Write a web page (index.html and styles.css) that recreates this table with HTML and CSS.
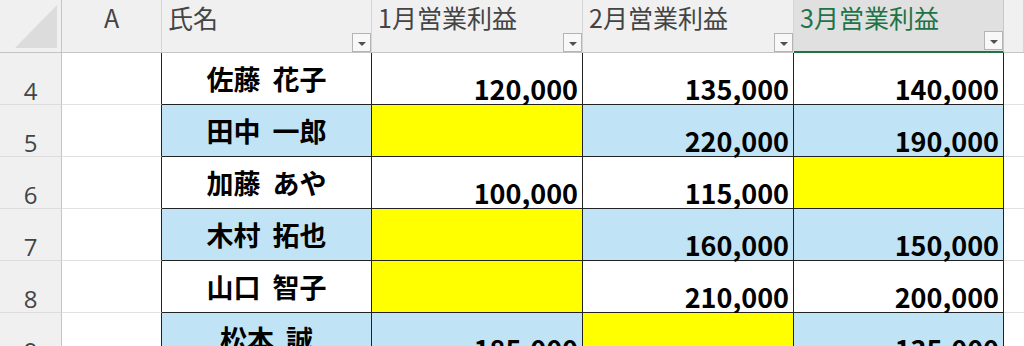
FILE: index.html
```html
<!DOCTYPE html>
<html lang="ja">
<head>
<meta charset="utf-8">
<title>Sheet</title>
<link rel="stylesheet" href="styles.css">
</head>
<body>
<div class="sheet">
  <div class="hd corner"><svg class="tri" width="61" height="52" viewBox="0 0 61 52"><polygon points="57,5 57,48 15,48" fill="#dcdcdc"/></svg></div>
  <div class="hd col center"><span class="htext">A</span></div>
  <div class="hd col"><span class="htext">氏名</span><span class="filter"><i></i></span></div>
  <div class="hd col"><span class="htext">1月営業利益</span><span class="filter"><i></i></span></div>
  <div class="hd col"><span class="htext">2月営業利益</span><span class="filter"><i></i></span></div>
  <div class="hd col sel"><span class="htext">3月営業利益</span><span class="filter"><i></i></span></div>
  <div class="hd col"></div>

  <div class="rh">4</div><div class="ga"></div>
  <div class="tc name">佐藤 花子</div><div class="tc num">120,000</div><div class="tc num">135,000</div><div class="tc num">140,000</div><div class="gf"></div>

  <div class="rh">5</div><div class="ga"></div>
  <div class="tc name blue">田中 一郎</div><div class="tc num yellow"></div><div class="tc num blue">220,000</div><div class="tc num blue">190,000</div><div class="gf"></div>

  <div class="rh">6</div><div class="ga"></div>
  <div class="tc name">加藤 あや</div><div class="tc num">100,000</div><div class="tc num">115,000</div><div class="tc num yellow"></div><div class="gf"></div>

  <div class="rh">7</div><div class="ga"></div>
  <div class="tc name blue">木村 拓也</div><div class="tc num yellow"></div><div class="tc num blue">160,000</div><div class="tc num blue">150,000</div><div class="gf"></div>

  <div class="rh">8</div><div class="ga"></div>
  <div class="tc name">山口 智子</div><div class="tc num yellow"></div><div class="tc num">210,000</div><div class="tc num">200,000</div><div class="gf"></div>

  <div class="rh">9</div><div class="ga"></div>
  <div class="tc name blue">松本 誠</div><div class="tc num blue">185,000</div><div class="tc num yellow"></div><div class="tc num blue">135,000</div><div class="gf"></div>
</div>
</body>
</html>
```
FILE: styles.css
```css
html, body {
  margin: 0;
  padding: 0;
  background: #ffffff;
  overflow: hidden;
}
.sheet {
  display: grid;
  grid-template-columns: 62px 100px 210px 211px 211px 210px 1fr;
  grid-template-rows: 53px repeat(6, 52px);
  width: 1024px;
  height: 346px;
  overflow: hidden;
  font-family: "Noto Sans CJK JP", "Noto Sans", sans-serif;
}
.sheet > div {
  box-sizing: border-box;
  min-width: 0;
}
.hd {
  background: #f0f0f0;
  border-right: 1px solid #d6d6d6;
  border-bottom: 1px solid #c4c4c4;
  color: #444444;
  font-size: 25px;
  line-height: 25px;
  display: flex;
  flex-direction: column;
}
.corner {
  border-right: 1px solid #c4c4c4;
}
.tri {
  display: block;
}
.htext {
  padding: 5px 6px 0 6px;
  white-space: nowrap;
}
.center .htext {
  text-align: center;
}
.sel {
  background: #e0e0e0;
  color: #217346;
  border-bottom: 2px solid #217346;
  border-right: 1px solid #c8c8c8;
}
.filter {
  margin-top: auto;
  align-self: flex-end;
  box-sizing: border-box;
  width: 19px;
  height: 19px;
  border: 1px solid #b4b4b4;
  background: #f8f8f8;
  display: flex;
  align-items: center;
  justify-content: center;
}
.sel .filter {
  margin-bottom: 1px;
}
.filter i {
  display: block;
  width: 0;
  height: 0;
  border-left: 4px solid transparent;
  border-right: 4px solid transparent;
  border-top: 4px solid #505050;
  margin-top: 2px;
}
.rh {
  background: #f0f0f0;
  border-right: 1px solid #c4c4c4;
  border-bottom: 1px solid #dcdcdc;
  color: #444444;
  font-family: "Open Sans", "Noto Sans", sans-serif;
  font-size: 24px;
  line-height: 24px;
  display: flex;
  align-items: flex-end;
  justify-content: center;
  padding-bottom: 1px;
}
.ga {
  border-right: 1px solid #222222;
  border-bottom: 1px solid #e1e1e1;
}
.gf {
  border-bottom: 1px solid #e1e1e1;
}
.tc {
  border-right: 1px solid #222222;
  border-bottom: 1px solid #222222;
  color: #000000;
  font-weight: 700;
  font-size: 27px;
  display: flex;
  white-space: nowrap;
}
.name {
  line-height: 27px;
  align-items: center;
  justify-content: center;
  word-spacing: 6px;
}
.num {
  line-height: 27px;
  align-items: flex-end;
  justify-content: flex-end;
  padding: 0 4px 2px 0;
}
.blue {
  background: #c0e4f5;
}
.yellow {
  background: #ffff00;
}
```
